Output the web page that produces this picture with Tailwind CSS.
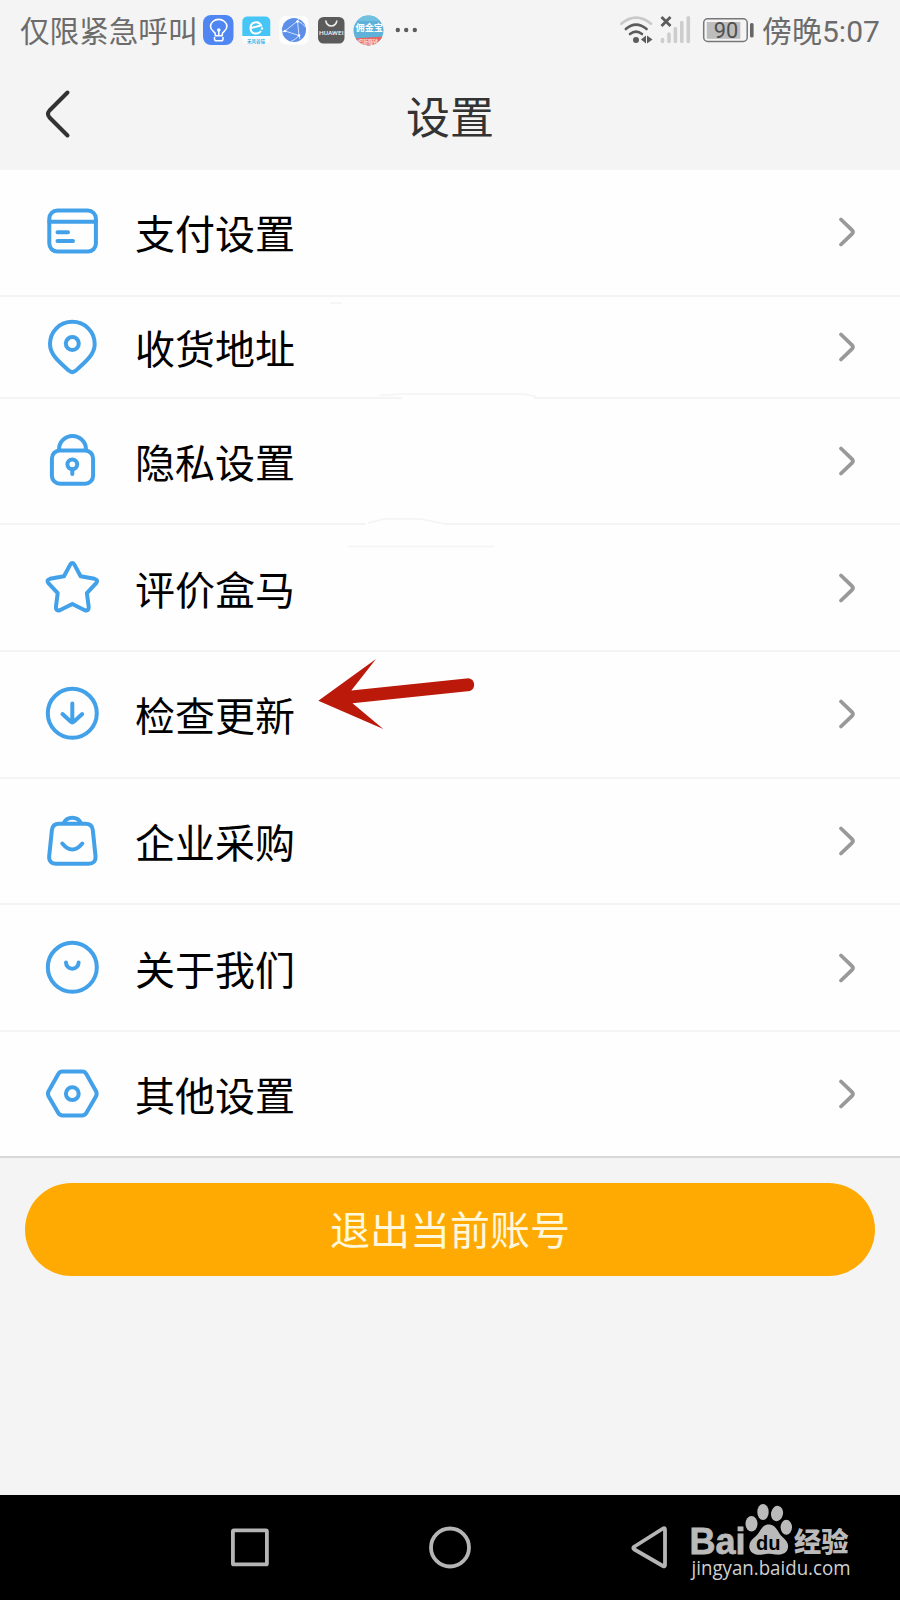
<!DOCTYPE html>
<html lang="zh-CN">
<head>
  <meta charset="UTF-8" />
  <meta name="viewport" content="width=device-width, initial-scale=1.0"/>
  <title>设置</title>
  <script src="https://cdn.jsdelivr.net/npm/@tailwindcss/browser@4"></script>
</head>
<body class="relative w-[900px] h-[1600px] flex flex-col bg-[#f4f4f4] overflow-hidden font-['Roboto','Noto_Sans_CJK_SC',sans-serif]">

  <!-- Status bar -->
  <div class="h-15 shrink-0 flex items-center justify-between pl-5 pr-5 text-[#6c6c6c]">
    <div class="flex items-center">
      <span class="w-[183px] pt-1 text-[29.6px] leading-[60px] whitespace-nowrap">仅限紧急呼叫</span>
      <svg class="w-[220px] h-15" viewBox="203 0 220 60" fill="none">
        <rect x="203" y="15" width="30.5" height="30" rx="8" fill="#4f86f2"/>
        <path d="M215.5 35v-2c0-1.500-4.800-3-4.800-7.200a8.200 7.200 0 0 1 16.400 0c0 4.200-4.600 5.700-4.600 7.200v2z" transform="translate(-.2 .8)" stroke="#fff" stroke-width="1.600" stroke-linejoin="round"/>
        <path d="M214.500 37v2q0 1.800 2 1.800h4.500q2 0 2-1.800v-2M218.800 31v5" stroke="#fff" stroke-width="1.500"/>
        <circle cx="218.800" cy="30" r="1.800" fill="#fff"/>

        <rect x="242.300" y="17" width="28" height="27" rx="5" fill="#fdfdfd"/>
        <path d="M242.300 36V22q0-5.500 5.500-5.500h17q5.500 0 5.500 5.500v14z" fill="#45c6f7"/>
        <path d="M251 28l10-2.500a5.500 5.500 0 0 0-10.500 2.500c0 6.500 7.500 7 10.500 3" stroke="#fff" stroke-width="2"/>
        <circle cx="262" cy="28.500" r="1.200" fill="#fff"/>
        <text x="247" y="42.500" font-size="5" font-weight="700" textLength="18" lengthAdjust="spacingAndGlyphs" fill="#45b4e6">禾风谷瑞</text>

        <rect x="279.500" y="16" width="29" height="28.500" rx="6" fill="#fdfdfd"/>
        <circle cx="294" cy="30" r="12" fill="#5c8fe9"/>
        <path d="M285 31l12.500-10 1.500 14.500zM285 31l-3 1M297.500 21l1.500-2.500M299 35.500l1 3.500M297.500 21q5 2 8 6M299 35.500q-3 4-8 6" stroke="#dfe9fb" stroke-width=".9"/>
        <g fill="#fff"><circle cx="285" cy="31" r="1.300"/><circle cx="297.500" cy="21.500" r="1.300"/><circle cx="299" cy="35.500" r="1.300"/></g>

        <rect x="318" y="17" width="26.500" height="26.500" rx="5.500" fill="#5b5b5b"/>
        <path d="M325.800 20.500a5.500 5.500 0 0 0 11 0" stroke="#eee" stroke-width="1.600"/>
        <text x="319" y="34.800" font-size="6.200" font-weight="500" textLength="24.500" lengthAdjust="spacingAndGlyphs" fill="#eee">HUAWEI</text>

        <clipPath id="coin"><circle cx="368.500" cy="30.500" r="15"/></clipPath>
        <g clip-path="url(#coin)">
          <path d="M353 15h31v31h-31z" fill="#5eb1d9"/>
          <path d="M353 15h31v6h-31z" fill="#70c0df"/>
          <path d="M353 38.500l31-2v10h-31z" fill="#e9645f"/>
          <text x="358" y="44" font-size="6" font-weight="700" textLength="20" lengthAdjust="spacingAndGlyphs" fill="#fbdada">招新赚钱</text>
        </g>
        <text x="355.500" y="30.500" font-size="9" font-weight="700" textLength="27.500" lengthAdjust="spacingAndGlyphs" fill="#fff">佣金宝</text>

        <g fill="#5c5c5c"><circle cx="397.800" cy="30" r="2.200"/><circle cx="406.200" cy="30" r="2.200"/><circle cx="414.800" cy="30" r="2.200"/></g>
      </svg>
    </div>
    <div class="flex items-center">
      <svg class="w-[142px] h-15" viewBox="618 0 142 60" fill="none">
        <g stroke-width="2.600" stroke-linecap="round">
          <path d="M621.300 23.800q14.700-12.300 29.700 0" stroke="#c9c9c9"/>
          <path d="M625.800 29q10.200-8.800 20.800 0" stroke="#5c5c5c"/>
          <path d="M630 34q6-4.800 12 0" stroke="#5c5c5c"/>
        </g>
        <circle cx="636" cy="40" r="3" fill="#5c5c5c"/>
        <path d="M641 39.500l5-4v8zM652.500 39.500l-5.500-4v8z" fill="#5c5c5c"/>
        <path d="M661.500 17l9 9M670.500 17l-9 9" stroke="#5c5c5c" stroke-width="2.800"/>
        <g stroke="#cdcdcd" stroke-width="3.600" stroke-linecap="round">
          <path d="M662.500 39.500v2M669 34v7.500M675.400 28.500v13M681.800 22.500v19M688.300 17.800v23.700"/>
        </g>
        <rect x="703.700" y="18.800" width="43.500" height="22.600" rx="4" stroke="#777" stroke-width="1.500"/>
        <rect x="706.800" y="22" width="33.500" height="16.800" fill="#bdbdbd"/>
        <text x="713.700" y="37.700" font-size="21.500" textLength="24.500" lengthAdjust="spacingAndGlyphs" fill="#505050">90</text>
        <rect x="750" y="23" width="3.600" height="14.500" rx="1.500" fill="#666"/>
      </svg>
      <span class="w-[120px] pl-[2px] pt-1 text-[30px] leading-[60px] whitespace-nowrap">傍晚<span class="text-[30px]">5:07</span></span>
    </div>
  </div>

  <!-- Title bar -->
  <header class="h-[110px] shrink-0 flex items-center px-[42px] text-[#333]">
    <svg class="w-10 h-15" viewBox="42 85 40 60" fill="none" stroke="#333" stroke-width="4" stroke-linecap="round" stroke-linejoin="round">
      <path d="M67.500 92.500L49.500 110.500Q46.500 114 49.500 117.500L67.500 135.500"/>
    </svg>
    <h1 class="grow pr-10 text-center text-[44px] leading-[60px] pt-2">设置</h1>
  </header>

  <!-- Settings list -->
  <ul class="shrink-0 bg-[#fefefe] text-[40px] leading-[60px] text-black">
    <li class="h-[126.67px] flex items-center pl-[42px] pr-[42px] border-b-2 border-[#f4f4f4]">
      <svg class="w-15 h-15" viewBox="0 0 60 60" fill="none" stroke="#42a1e8" stroke-width="4" stroke-linecap="round">
        <rect x="7.300" y="8.600" width="46.600" height="41" rx="8"/>
        <path d="M7.300 19.700h46.600M15.500 30.300h10.500M15.500 39h15.500"/>
      </svg>
      <span class="grow pl-[33px] pt-2">支付设置</span>
      <svg class="w-5 h-10" viewBox="0 0 20 40" fill="none" stroke="#999" stroke-width="3.800" stroke-linecap="round"><path d="M3 7.500L13.800 17.800Q16 20 13.800 22.200L3 32.500"/></svg>
    </li>
    <li class="h-[102px] flex items-center pl-[42px] pr-[42px] border-b-2 border-[#f4f4f4]">
      <svg class="w-15 h-15" viewBox="0 0 60 60" fill="none" stroke="#42a1e8" stroke-width="4" stroke-linejoin="round">
        <path d="M30.300 4.800C17.500 4.800 8 14.800 8 27C8 37 15.500 43.500 26.800 53.600Q30.300 56.600 33.800 53.600C45 43.500 52.700 37 52.700 27C52.700 14.800 43 4.800 30.300 4.800z"/>
        <circle cx="30.300" cy="26.600" r="6.500"/>
      </svg>
      <span class="grow pl-[33px] pt-2">收货地址</span>
      <svg class="w-5 h-10" viewBox="0 0 20 40" fill="none" stroke="#999" stroke-width="3.800" stroke-linecap="round"><path d="M3 7.500L13.800 17.800Q16 20 13.800 22.200L3 32.500"/></svg>
    </li>
    <li class="h-[126.67px] flex items-center pl-[42px] pr-[42px] border-b-2 border-[#f4f4f4]">
      <svg class="w-15 h-15" viewBox="0 0 60 60" fill="none" stroke="#42a1e8" stroke-width="4" stroke-linecap="round">
        <rect x="9.900" y="19.400" width="41.200" height="33.400" rx="8"/>
        <path d="M17 18.500a13.500 13.500 0 0 1 27 0M30.300 38v5"/>
        <circle cx="30.300" cy="33.300" r="4.900"/>
      </svg>
      <span class="grow pl-[33px] pt-2">隐私设置</span>
      <svg class="w-5 h-10" viewBox="0 0 20 40" fill="none" stroke="#999" stroke-width="3.800" stroke-linecap="round"><path d="M3 7.500L13.800 17.800Q16 20 13.800 22.200L3 32.500"/></svg>
    </li>
    <li class="h-[126.67px] flex items-center pl-[42px] pr-[42px] border-b-2 border-[#f4f4f4]">
      <svg class="w-15 h-15" viewBox="0 0 60 60" fill="none" stroke="#42a1e8" stroke-width="4" stroke-linejoin="round">
        <path d="M28.200 6.600Q30.300 3.500 32.400 6.600L38.600 18.200L52.600 20.800Q56.600 22 54.200 25.200L44.900 35.200L46.700 49Q46.800 53.200 42.800 52.200L30.300 46L17.800 52.200Q13.800 53.200 13.900 49L15.700 35.200L6.400 25.200Q4 22 8 20.800L22 18.200z"/>
      </svg>
      <span class="grow pl-[33px] pt-2">评价盒马</span>
      <svg class="w-5 h-10" viewBox="0 0 20 40" fill="none" stroke="#999" stroke-width="3.800" stroke-linecap="round"><path d="M3 7.500L13.800 17.800Q16 20 13.800 22.200L3 32.500"/></svg>
    </li>
    <li class="h-[126.67px] flex items-center pl-[42px] pr-[42px] border-b-2 border-[#f4f4f4]">
      <svg class="w-15 h-15" viewBox="0 0 60 60" fill="none" stroke="#42a1e8" stroke-width="4" stroke-linecap="round" stroke-linejoin="round">
        <circle cx="30.300" cy="29.300" r="24.500"/>
        <path d="M30.300 19.500v18.500M20.500 30L28.600 37.500Q30.300 39.100 32 37.500L40.200 30"/>
      </svg>
      <span class="grow pl-[33px] pt-2">检查更新</span>
      <svg class="w-5 h-10" viewBox="0 0 20 40" fill="none" stroke="#999" stroke-width="3.800" stroke-linecap="round"><path d="M3 7.500L13.800 17.800Q16 20 13.800 22.200L3 32.500"/></svg>
    </li>
    <li class="h-[126.67px] flex items-center pl-[42px] pr-[42px] border-b-2 border-[#f4f4f4]">
      <svg class="w-15 h-15" viewBox="0 0 60 60" fill="none" stroke="#42a1e8" stroke-width="4" stroke-linecap="round" stroke-linejoin="round">
        <path d="M17 12.700h26.600q6.500 0 7.200 6.300l2.700 26q.6 7.700-7 7.700H14.200q-7.600 0-7-7.700l2.700-26q.7-6.300 7.100-6.300z"/>
        <path d="M21.800 12a9.500 9.500 0 0 1 17 0M20.300 32.500q10 12 20 0"/>
      </svg>
      <span class="grow pl-[33px] pt-2">企业采购</span>
      <svg class="w-5 h-10" viewBox="0 0 20 40" fill="none" stroke="#999" stroke-width="3.800" stroke-linecap="round"><path d="M3 7.500L13.800 17.800Q16 20 13.800 22.200L3 32.500"/></svg>
    </li>
    <li class="h-[126.67px] flex items-center pl-[42px] pr-[42px] border-b-2 border-[#f4f4f4]">
      <svg class="w-15 h-15" viewBox="0 0 60 60" fill="none" stroke="#42a1e8" stroke-width="4" stroke-linecap="round">
        <circle cx="30.300" cy="29.300" r="24.500"/>
        <path d="M24 24.500a6.300 6.300 0 0 0 12.600 0"/>
      </svg>
      <span class="grow pl-[33px] pt-2">关于我们</span>
      <svg class="w-5 h-10" viewBox="0 0 20 40" fill="none" stroke="#999" stroke-width="3.800" stroke-linecap="round"><path d="M3 7.500L13.800 17.800Q16 20 13.800 22.200L3 32.500"/></svg>
    </li>
    <li class="h-[126px] flex items-center pl-[42px] pr-[42px] border-b-2 border-[#d8d8d8]">
      <svg class="w-15 h-15" viewBox="0 0 60 60" fill="none" stroke="#42a1e8" stroke-width="4" stroke-linejoin="round">
        <path d="M20.500 7.500h19.600q2.800 0 4.200 2.400l9.600 17q1.500 2.800 0 5.600l-9.600 16.500q-1.400 2.400-4.200 2.400H20.500q-2.800 0-4.200-2.400l-9.600-16.500q-1.500-2.800 0-5.600l9.600-17q1.400-2.400 4.200-2.400z"/>
        <circle cx="30.300" cy="29.700" r="6.400"/>
      </svg>
      <span class="grow pl-[33px] pt-2">其他设置</span>
      <svg class="w-5 h-10" viewBox="0 0 20 40" fill="none" stroke="#999" stroke-width="3.800" stroke-linecap="round"><path d="M3 7.500L13.800 17.800Q16 20 13.800 22.200L3 32.500"/></svg>
    </li>
  </ul>

  <!-- Log out -->
  <main class="grow px-[25px] pt-[25px]">
    <button class="w-full h-[93px] pt-[6px] rounded-full bg-[#ffaa02] text-[#fff8dc] text-[40px] leading-[60px]">退出当前账号</button>
  </main>

  <!-- Navigation bar -->
  <footer class="h-[105px] shrink-0 bg-black">
    <svg class="w-full h-full" viewBox="0 1495 900 105" fill="none">
      <g stroke="#b5b5b5" stroke-width="3.800" stroke-linejoin="round">
        <rect x="232.900" y="1530.400" width="34" height="34" rx="1"/>
        <circle cx="450" cy="1547.500" r="19"/>
        <path d="M665 1529.500v35.500q0 2-2 1L634.500 1549.500q-2.500-1.500 0-3L663 1528.500q2-1 2 1z"/>
      </g>
      <g fill="#bababa">
        <text x="689.500" y="1553.500" font-size="37" font-weight="700" font-family="Liberation Sans" textLength="56" lengthAdjust="spacingAndGlyphs" stroke="#bababa" stroke-width=".8">Bai</text>
        <ellipse cx="751.500" cy="1523.700" rx="6" ry="7.800"/>
        <ellipse cx="763" cy="1512" rx="5.700" ry="8"/>
        <ellipse cx="777" cy="1513.500" rx="6" ry="7.700" transform="rotate(12 777 1513.500)"/>
        <ellipse cx="786.300" cy="1527.200" rx="5.700" ry="7.500"/>
        <path d="M768.500 1524.500c8 0 9 8 14 12.500 5.500 5 6.500 8 5 12.500-2 5-8 5.500-12 5-5-1-8-1-13 0-6 .8-11.500-.5-13-6-1-5 1.500-8.500 6-12 5-4.500 6-12 13-12z"/>
        <text x="794" y="1552" font-size="27.500" font-weight="900" textLength="54.500" lengthAdjust="spacingAndGlyphs">经验</text>
      </g>
      <text x="756" y="1549.500" font-size="21" font-weight="700" font-family="Liberation Sans" textLength="24.500" lengthAdjust="spacingAndGlyphs" fill="#000">du</text>
      <text x="691.500" y="1575" font-size="20.500" font-family="Open Sans" textLength="159" lengthAdjust="spacingAndGlyphs" fill="#d0d0d0">jingyan.baidu.com</text>
    </svg>
  </footer>

  <!-- Red pointer and the faint traces left between rows -->
  <svg class="absolute left-0 top-0 w-[900px] h-[800px] pointer-events-none" viewBox="0 0 900 800" fill="none">
    <path d="M402 396h132v4H402zM366 522h78v4h-78z" fill="#fefefe"/>
    <path d="M330 303h12M380 395.500l24-1.500h120l12 2.500M368 523l16-4h37l24 5M348 546.500h146" stroke="#f4f4f4" stroke-width="1.500"/>
    <path d="M318.300 700.700L376 659L351.300 690.500L468.500 678.200A6.700 6.700 0 0 1 470 691L352.500 703.300L383.300 729z" fill="#bb1a0b"/>
  </svg>

</body>
</html>
